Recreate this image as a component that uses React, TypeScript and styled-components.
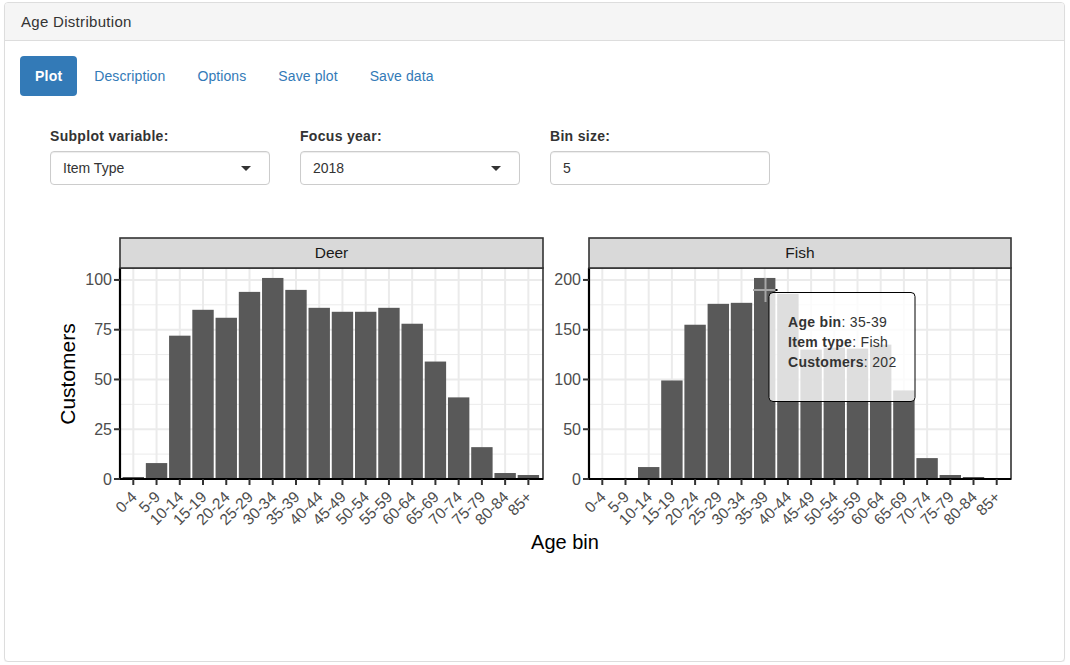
import React from "react";
import styled, { createGlobalStyle } from "styled-components";

const GlobalStyle = createGlobalStyle`
  html, body { margin: 0; padding: 0; background: #fff; }
  body {
    font-family: "Liberation Sans", Arial, Helvetica, sans-serif;
    font-size: 14px;
    line-height: 1.42857;
    color: #333;
  }
  * { box-sizing: border-box; }
`;

const Page = styled.div`
  padding: 2px 5px 0 4px;
`;

const Card = styled.section`
  height: 660px;
  border: 1px solid #ddd;
  border-radius: 4px;
  box-shadow: 0 1px 1px rgba(0, 0, 0, 0.05);
  background: #fff;
  display: flex;
  flex-direction: column;
`;

const CardHeader = styled.header`
  height: 38px;
  padding: 10px 15px 0 16px;
  background: #f5f5f5;
  border-bottom: 1px solid #ddd;
  border-radius: 3px 3px 0 0;
  font-size: 15px;
  letter-spacing: 0.3px;
  line-height: 17px;
  color: #333;
`;

const CardBody = styled.div`
  padding: 15px;
  flex: 1;
  display: flex;
  flex-direction: column;
`;

const Pills = styled.ul`
  display: flex;
  list-style: none;
  margin: 0;
  padding: 0;
  gap: 2px;
`;

const Pill = styled.li<{ $active?: boolean }>`
  padding: 10px 15px;
  line-height: 20px;
  font-size: 14px;
  letter-spacing: ${(p) => (p.$active ? "0.2px" : "0.1px")};
  border-radius: 4px;
  cursor: pointer;
  background: ${(p) => (p.$active ? "#337ab7" : "transparent")};
  color: ${(p) => (p.$active ? "#fff" : "#337ab7")};
  font-weight: ${(p) => (p.$active ? 700 : 400)};
`;

const FormRow = styled.div`
  display: flex;
  gap: 30px;
  margin-top: 30px;
  padding-left: 30px;
`;

const Field = styled.div`
  width: 220px;
  display: flex;
  flex-direction: column;
`;

const Label = styled.label`
  font-weight: 700;
  font-size: 14px;
  letter-spacing: 0.3px;
  line-height: 20px;
  margin-bottom: 5px;
  color: #333;
`;

const Box = styled.div`
  height: 34px;
  border: 1px solid #ccc;
  border-radius: 4px;
  padding: 6px 12px;
  line-height: 20px;
  font-size: 14px;
  color: #333;
  background: #fff;
  box-shadow: inset 0 1px 1px rgba(0, 0, 0, 0.075);
  display: flex;
  align-items: center;
  justify-content: space-between;
`;

const Caret = styled.span`
  width: 0;
  height: 0;
  margin-right: 6px;
  border-left: 5px solid transparent;
  border-right: 5px solid transparent;
  border-top: 5px solid #333;
`;

const ChartSvg = styled.svg`
  display: block;
  margin-top: 15px;
  font-family: "Liberation Sans", Arial, Helvetica, sans-serif;
`;

const BINS = [
  "0-4", "5-9", "10-14", "15-19", "20-24", "25-29", "30-34", "35-39", "40-44",
  "45-49", "50-54", "55-59", "60-64", "65-69", "70-74", "75-79", "80-84", "85+",
];

type Panel = {
  x0: number;
  x1: number;
  max: number;
  ticks: number[];
  minor: number[];
  firstX: number;
  step: number;
  label: string;
  data: number[];
};

const TOP = 268;
const BOT = 479;

const panels: Panel[] = [
  {
    x0: 120,
    x1: 543,
    max: 106,
    ticks: [0, 25, 50, 75, 100],
    minor: [12.5, 37.5, 62.5, 87.5],
    firstX: 133.3,
    step: 23.24,
    label: "Deer",
    data: [1, 8, 72, 85, 81, 94, 101, 95, 86, 84, 84, 86, 78, 59, 41, 16, 3, 2],
  },
  {
    x0: 589,
    x1: 1011,
    max: 212,
    ticks: [0, 50, 100, 150, 200],
    minor: [25, 75, 125, 175],
    firstX: 602.3,
    step: 23.2,
    label: "Fish",
    data: [0, 0, 12, 99, 155, 176, 177, 202, 186, 130, 132, 131, 135, 89, 21, 4, 2, 0],
  },
];

function PanelPlot({ p }: { p: Panel }) {
  const sy = (v: number) => BOT - (v / p.max) * (BOT - TOP);
  const w = p.x1 - p.x0;
  const xs = BINS.map((_, i) => p.firstX + i * p.step);
  return (
    <g>
      <rect x={p.x0} y={TOP} width={w} height={BOT - TOP} fill="#fff" />
      {p.minor.map((v) => (
        <line key={"m" + v} x1={p.x0} x2={p.x1} y1={sy(v)} y2={sy(v)} stroke="#EBEBEB" strokeWidth={1} />
      ))}
      {p.ticks.map((v) => (
        <line key={"h" + v} x1={p.x0} x2={p.x1} y1={sy(v)} y2={sy(v)} stroke="#EBEBEB" strokeWidth={2} />
      ))}
      {xs.map((x, i) => (
        <line key={"v" + i} x1={x} x2={x} y1={TOP} y2={BOT} stroke="#EBEBEB" strokeWidth={2} />
      ))}
      {p.data.map((v, i) =>
        v > 0 ? (
          <rect key={"b" + i} x={xs[i] - 10.7} y={sy(v)} width={21.4} height={BOT - sy(v)} fill="#595959" />
        ) : null
      )}
      <rect x={p.x0} y={TOP} width={w} height={BOT - TOP} fill="none" stroke="#333" strokeWidth={1.6} />
      <line x1={p.x0} x2={p.x0} y1={TOP} y2={BOT + 1} stroke="#000" strokeWidth={2.2} />
      <line x1={p.x0 - 1} x2={p.x1} y1={BOT} y2={BOT} stroke="#000" strokeWidth={2.2} />
      <rect x={p.x0} y={238} width={w} height={30} fill="#D9D9D9" stroke="#333" strokeWidth={1.6} />
      <text x={p.x0 + w / 2} y={258} textAnchor="middle" fontSize={15.5} fill="#1A1A1A">
        {p.label}
      </text>
      {p.ticks.map((v) => (
        <g key={"yt" + v}>
          <line x1={p.x0 - 6} x2={p.x0} y1={sy(v)} y2={sy(v)} stroke="#333" strokeWidth={2} />
          <text x={p.x0 - 8} y={sy(v) + 5.5} textAnchor="end" fontSize={16} fill="#4D4D4D">
            {v}
          </text>
        </g>
      ))}
      {xs.map((x, i) => (
        <g key={"xt" + i}>
          <line x1={x} x2={x} y1={BOT} y2={BOT + 6} stroke="#333" strokeWidth={2} />
          <text
            transform={`translate(${x + 4.5},${498}) rotate(-45)`}
            textAnchor="end"
            fontSize={15.5}
            fill="#4D4D4D"
          >
            {BINS[i]}
          </text>
        </g>
      ))}
    </g>
  );
}

function Tooltip() {
  return (
    <g>
      <line x1={753} x2={777} y1={290} y2={290} stroke="#A6A6A6" strokeWidth={2} />
      <line x1={765.5} x2={765.5} y1={278} y2={302} stroke="#A6A6A6" strokeWidth={2} />
      <rect x={775.5} y={289} width={2} height={2} fill="#000" />
      <rect x={769} y={292.5} width={146} height={109} rx={4} fill="rgba(255,255,255,0.8)" stroke="#000" strokeWidth={1} />
      <text x={788} y={327} fontSize={14} letterSpacing={0.3} fill="#333">
        <tspan fontWeight={700}>Age bin</tspan>: 35-39
      </text>
      <text x={788} y={347} fontSize={14} letterSpacing={0.3} fill="#333">
        <tspan fontWeight={700}>Item type</tspan>: Fish
      </text>
      <text x={788} y={367} fontSize={14} letterSpacing={0.3} fill="#333">
        <tspan fontWeight={700}>Customers</tspan>: 202
      </text>
    </g>
  );
}

export default function App() {
  return (
    <Page>
      <GlobalStyle />
      <Card>
        <CardHeader>Age Distribution</CardHeader>
        <CardBody>
          <Pills>
            <Pill $active>Plot</Pill>
            <Pill>Description</Pill>
            <Pill>Options</Pill>
            <Pill>Save plot</Pill>
            <Pill>Save data</Pill>
          </Pills>
          <FormRow>
            <Field>
              <Label>Subplot variable:</Label>
              <Box>
                <span>Item Type</span>
                <Caret />
              </Box>
            </Field>
            <Field>
              <Label>Focus year:</Label>
              <Box>
                <span>2018</span>
                <Caret />
              </Box>
            </Field>
            <Field>
              <Label>Bin size:</Label>
              <Box>
                <span>5</span>
              </Box>
            </Field>
          </FormRow>
          <ChartSvg width={1030} height={370} viewBox="20 200 1030 370">
            {panels.map((p) => (
              <PanelPlot key={p.label} p={p} />
            ))}
            <Tooltip />
            <text transform="translate(75,374) rotate(-90)" textAnchor="middle" fontSize={21} fill="#000">
              Customers
            </text>
            <text x={565} y={549} textAnchor="middle" fontSize={20} fill="#000">
              Age bin
            </text>
          </ChartSvg>
        </CardBody>
      </Card>
    </Page>
  );
}
